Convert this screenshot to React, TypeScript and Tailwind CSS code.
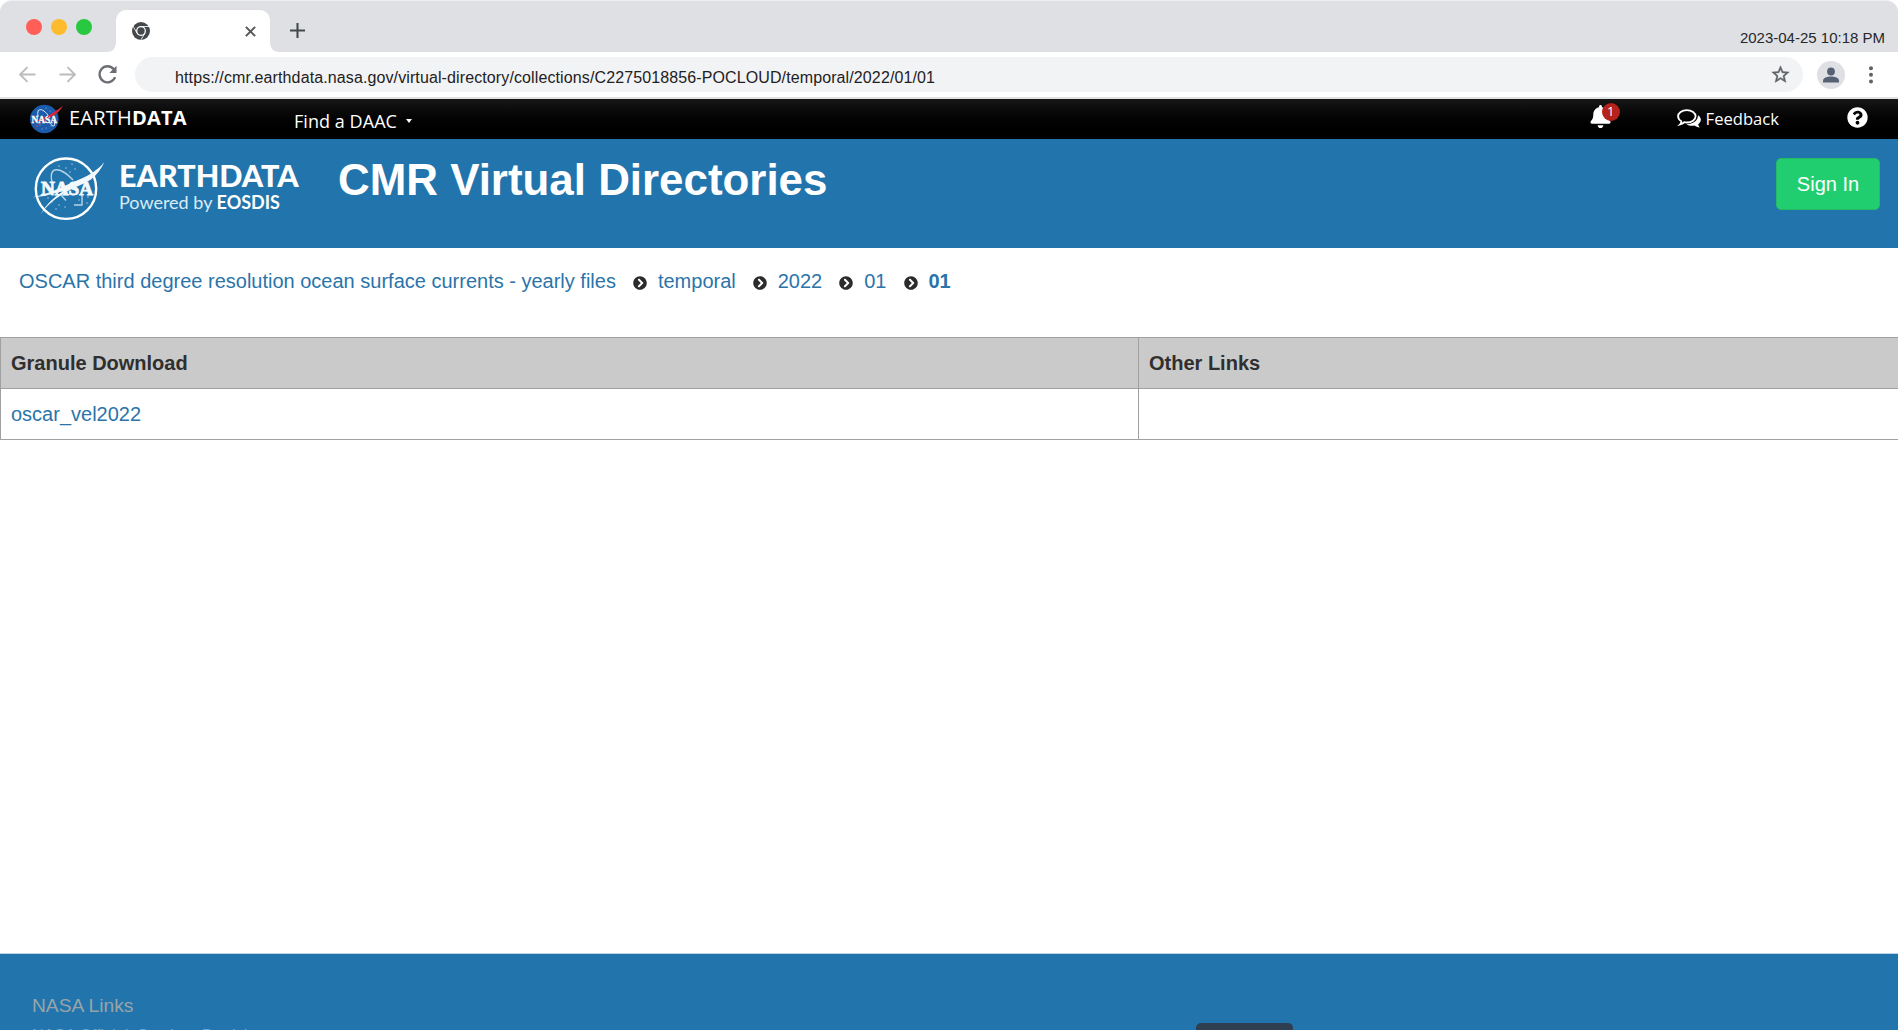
import React from "react";
import { FaBell, FaQuestionCircle, FaChevronCircleRight } from "react-icons/fa";

function ChromeIcon() {
  return (
    <svg viewBox="0 0 24 24" className="h-[18px] w-[18px]">
      <circle cx="12" cy="12" r="12" fill="#45484b" />
      <circle cx="12" cy="12" r="6.6" fill="#fff" />
      <path d="M12 6 H24 M6.8 15 L1 5 M17.2 15 L11.2 25" stroke="#fff" strokeWidth="1.1" fill="none" />
      <circle cx="12" cy="12" r="4.9" fill="#45484b" />
    </svg>
  );
}

function Meatball() {
  return (
    <svg viewBox="0 0 36 30" className="h-[30px] w-[36px]">
      <circle cx="16.300" cy="15" r="14.300" fill="#1a5bab" />
      <g fill="#b9cdea">
        <circle cx="10" cy="6" r=".5" /><circle cx="18" cy="4" r=".5" /><circle cx="22" cy="7" r=".5" />
        <circle cx="9" cy="22" r=".5" /><circle cx="14" cy="25" r=".5" /><circle cx="18" cy="24" r=".5" />
        <circle cx="23" cy="22" r=".5" /><circle cx="12" cy="21" r=".5" />
      </g>
      <path d="M10 12 C8 2 17 5 21 13 M21 18 C25 24 28 23 26 17" stroke="#dfe8f5" strokeWidth="1" fill="none" />
      <path d="M1 19 C10 17 20 12 26 8 C30 5.500 33 4 35 1.500 C33 6 29 9.500 25 12 C16 16 9 21 4.500 27.500 C8 21.500 13 17.500 19 14 C13 16.500 7 18.300 1 19Z" fill="#d4283c" />
      <text x="3.500" y="18.800" textLength="25.500" lengthAdjust="spacingAndGlyphs" fill="#fff" stroke="#fff" strokeWidth=".3" className="font-['Liberation_Serif'] text-[10px] font-bold">NASA</text>
      <path d="M20 13.300 C26 10.500 31 6.500 35 1.500 C31 6 25 9 20 12Z" fill="#d4283c" />
    </svg>
  );
}

function NasaMark() {
  return (
    <svg viewBox="0 0 74 66" className="h-[66px] w-[74px]">
      <circle cx="34" cy="33.700" r="30.200" fill="none" stroke="#fff" strokeWidth="2.400" />
      <g fill="#9cc3de">
        <circle cx="27" cy="11" r=".8" /><circle cx="34" cy="13" r=".8" /><circle cx="40" cy="9" r=".8" />
        <circle cx="43" cy="14" r=".8" /><circle cx="31" cy="17" r=".8" /><circle cx="16" cy="43" r=".8" />
        <circle cx="20" cy="47" r=".8" /><circle cx="27" cy="50" r=".8" /><circle cx="33" cy="52" r=".8" />
        <circle cx="24" cy="54" r=".8" /><circle cx="47" cy="45" r=".8" /><circle cx="56" cy="42" r=".8" />
        <circle cx="55" cy="48" r=".8" /><circle cx="38" cy="17" r=".8" />
      </g>
      <path d="M20 27 C16 9 30 13 41 25 M20 27 L21 37 M29 40 L34 45.500 M50 40 V50 H42" stroke="#b9d4e8" strokeWidth="1.400" fill="none" />
      <text x="9" y="39.700" textLength="52" lengthAdjust="spacingAndGlyphs" fill="#f2f8fc" stroke="#f2f8fc" strokeWidth=".9" className="font-['Liberation_Serif'] text-[18px] font-bold">NASA</text>
      <path d="M.7 42.300 C15 39 26 34 38 28.500 C47 24.500 54 22 60 18 C66 14 69 11 72.300 7.300 C69 14 65 20 59 24.500 C52 29 43 32 35 36.500 C24 43 15 50 8.700 59.300 C14 49.500 22 42 33 35 C22 39 10 42 .7 42.300Z" fill="#f2f8fc" />
    </svg>
  );
}

function ChatIcon() {
  return (
    <svg viewBox="0 0 24 20" className="h-[20px] w-[24px]">
      <path d="M21 6.200 C25 9 24.600 13 21.200 15.200 C21.300 16.600 22.200 17.600 23 18.600 C20.500 18.500 18.800 17.600 17.600 16.600 C14.500 17.200 11.500 16.600 9.500 15.200 C16 15.200 21 11.500 21 6.200Z" fill="#fff" />
      <path d="M9.800 1.200 C14.800 1.200 18.600 3.900 18.600 7.300 C18.600 10.800 14.800 13.500 9.800 13.500 C8.800 13.500 8 13.400 7.200 13.200 C5.900 14.300 4.600 15 3 15.500 C4 14.400 4.300 13.500 4.300 12.200 C2.300 11.100 1.100 9.300 1.100 7.300 C1.100 3.900 4.800 1.200 9.800 1.200Z" fill="none" stroke="#fff" strokeWidth="1.800" />
    </svg>
  );
}

function BrowserChrome() {
  return (
    <header className="h-[99px] shrink-0 font-['Liberation_Sans',sans-serif]">
      <div className="flex h-[52px] rounded-t-[12px] border-t border-[#eeeff1] bg-[#dfe0e4]">
        <div className="flex w-[116px] gap-[9px] pt-[18px] pl-[26px]">
          <i className="size-4 rounded-full bg-[#ff5f57]" />
          <i className="size-4 rounded-full bg-[#febb2e]" />
          <i className="size-4 rounded-full bg-[#28c840]" />
        </div>
        <div className="relative mt-[9px] flex h-[42px] w-[154px] items-center justify-between rounded-t-[10px] bg-white px-4">
          <svg viewBox="0 0 10 10" className="absolute bottom-0 -left-[10px] size-[10px]"><path d="M10 0 Q10 10 0 10 H10Z" fill="#fff" /></svg>
          <svg viewBox="0 0 10 10" className="absolute -right-[10px] bottom-0 size-[10px]"><path d="M0 0 Q0 10 10 10 H0Z" fill="#fff" /></svg>
          <ChromeIcon />
          <svg viewBox="0 0 10 10" className="mr-[-2px] size-[11px]"><path d="M.8 .8 L9.200 9.200 M9.200 .8 L.8 9.200" stroke="#56595c" strokeWidth="1.900" /></svg>
        </div>
        <svg viewBox="0 0 16 16" className="mt-[22px] ml-5 size-[15px]"><path d="M8 0 V16 M0 8 H16" stroke="#45484b" strokeWidth="2.200" /></svg>
        <div className="mr-[13px] ml-auto pt-[27px] text-[15px] leading-[20px] text-[#26282a]">2023-04-25 10:18 PM</div>
      </div>
      <div className="flex h-[47px] items-center border-b-2 border-[#e0e1e3] bg-white pl-[19px]">
        <svg viewBox="0 0 16 16" className="size-[17px]"><path d="M15.500 8 H1.500 M8 1 L1 8 L8 15" stroke="#babcbe" strokeWidth="1.800" fill="none" /></svg>
        <svg viewBox="0 0 16 16" className="ml-[23px] size-[17px]"><path d="M.5 8 H14.500 M8 1 L15 8 L8 15" stroke="#babcbe" strokeWidth="1.800" fill="none" /></svg>
        <svg viewBox="0 0 18 18" className="ml-[22px] size-[19px]"><path d="M15 4 A7.600 7.600 0 1 0 16.200 11.500" stroke="#6b6e72" strokeWidth="2.200" fill="none" /><path d="M17.500 .8 V7.500 H10.800Z" fill="#6b6e72" /></svg>
        <div className="ml-[18px] flex h-[35px] w-[1668px] items-center justify-between rounded-full bg-[#f1f3f4] pr-[12px] pl-10">
          <span className="pt-[7px] text-[16px] leading-[24px] tracking-[0.112px] text-[#1f2123]">https://cmr.earthdata.nasa.gov/virtual-directory/collections/C2275018856-POCLOUD/temporal/2022/01/01</span>
          <svg viewBox="0 0 24 24" className="size-[21px]"><path d="M22 9.240l-7.190-.62L12 2 9.190 8.630 2 9.240l5.460 4.730L5.820 21 12 17.270 18.180 21l-1.630-7.030L22 9.240zM12 15.400l-3.760 2.270 1-4.280-3.320-2.880 4.380-.38L12 6.100l1.710 4.040 4.380.38-3.320 2.880 1 4.280L12 15.400z" fill="#5f6368" stroke="#5f6368" strokeWidth=".5" /></svg>
        </div>
        <svg viewBox="0 0 28 28" className="ml-[14px] size-[28px]"><circle cx="14" cy="14" r="14" fill="#dfe0e4" /><circle cx="14" cy="10.500" r="3.900" fill="#566174" /><path d="M6 21.500 V20 C6 16.500 10.500 15.600 14 15.600 S22 16.500 22 20 V21.500Z" fill="#566174" /></svg>
        <svg viewBox="0 0 4 18" className="ml-[24px] h-[18px] w-[4px]"><g fill="#5f6368"><circle cx="2" cy="2.200" r="2" /><circle cx="2" cy="8.800" r="2" /><circle cx="2" cy="15.400" r="2" /></g></svg>
      </div>
    </header>
  );
}

const crumbs = ["temporal", "2022", "01"];

function Chevron() {
  return <FaChevronCircleRight className="mt-[3px] mr-[11px] ml-[17px] size-[14px] text-[#2b2b2b]" />;
}

export default function App() {
  return (
    <div className="flex h-[1030px] w-[1898px] flex-col overflow-hidden bg-white font-['Liberation_Sans',sans-serif]">
      <BrowserChrome />
      <nav className="flex h-[40px] shrink-0 items-start bg-linear-to-b from-[#171717] to-black font-['Open_Sans',sans-serif] text-white">
        <div className="mt-[5px] ml-[28px]"><Meatball /></div>
        <div className="mt-[6px] ml-[5px] w-[225px] text-[20px] leading-[26px] tracking-[0.200px]">EARTH<b>DATA</b></div>
        <div className="mt-[9px] flex items-center text-[18px] leading-[26px] tracking-[0.050px]">Find a DAAC<span className="ml-[9px] border-x-[3px] border-t-[4px] border-x-transparent border-t-white" /></div>
        <div className="relative mt-[6px] ml-auto flex h-6 w-[88px]">
          <FaBell className="size-[23px]" />
          <span className="absolute -top-[2px] left-[13px] flex size-[18px] items-center justify-center rounded-full bg-[#b5211b] text-[13px]">1</span>
        </div>
        <div className="mt-[7px] flex items-center gap-[5px] text-[16.600px] leading-[26px]"><ChatIcon />Feedback</div>
        <FaQuestionCircle className="mt-[8px] mr-[30px] ml-[68px] size-[21px]" />
      </nav>
      <section className="flex h-[109px] shrink-0 items-start bg-[#2275ac] text-white">
        <div className="mt-[16px] ml-[32px]"><NasaMark /></div>
        <div className="mt-[20px] ml-[13px] w-[219px] font-['Lato',sans-serif] whitespace-nowrap">
          <div className="text-[30.500px] leading-[32px] font-black">EARTHDATA</div>
          <div className="text-[18px] leading-[22px] text-[#dcebf5]">Powered by <b className="text-white">EOSDIS</b></div>
        </div>
        <h1 className="mt-[15px] text-[43.900px] leading-[52px] font-bold">CMR Virtual Directories</h1>
        <button className="mt-[19px] mr-[18px] ml-auto h-[52px] w-[104px] rounded-[5px] border border-[#27b966] bg-[#21ce6f] text-[20px]">Sign In</button>
      </section>
      <div className="flex h-[89px] shrink-0 items-start pt-[19px] pl-[19px] text-[20px] leading-[28px] text-[#2b74aa]">
        <a>OSCAR third degree resolution ocean surface currents - yearly files</a>
        {crumbs.map((c) => (
          <span key={c} className="flex items-center"><Chevron /><a>{c}</a></span>
        ))}
        <span className="flex items-center"><Chevron /><b>01</b></span>
      </div>
      <div className="grid h-[103px] shrink-0 grid-cols-[1137px_760px] grid-rows-[51px_50px] border-y border-l border-[#a0a0a0] text-[20px]">
        <div className="flex items-center border-b border-[#a0a0a0] bg-[#cacaca] pb-px pl-[10px] font-bold text-[#2f2f2f]">Granule Download</div>
        <div className="flex items-center border-b border-l border-[#a0a0a0] bg-[#cacaca] pb-px pl-[10px] font-bold text-[#2f2f2f]">Other Links</div>
        <div className="flex items-center pl-[10px] text-[#2b74aa]">oscar_vel2022</div>
        <div className="border-l border-[#a0a0a0]" />
      </div>
      <footer className="relative mt-auto h-[77px] shrink-0 overflow-hidden border-t border-[#b9d3e5] bg-[#2275ac] pt-[38px] pl-[32px] text-[19.200px] text-[#99a4a8]">
        <div className="leading-[28px]">NASA Links</div>
        <div className="mt-[5px] text-[16.100px] leading-[20px] whitespace-nowrap text-[#70a6cd]">NASA Official: Stephen Berrick</div>
        <div className="absolute top-[69px] left-[1196px] h-[30px] w-[97px] rounded-[5px] bg-[#2f3e50] pt-[4px] pl-[22px] text-[12.500px] leading-[16px] whitespace-nowrap text-[#8d8da0]">v 1.186.1-88</div>
      </footer>
    </div>
  );
}
